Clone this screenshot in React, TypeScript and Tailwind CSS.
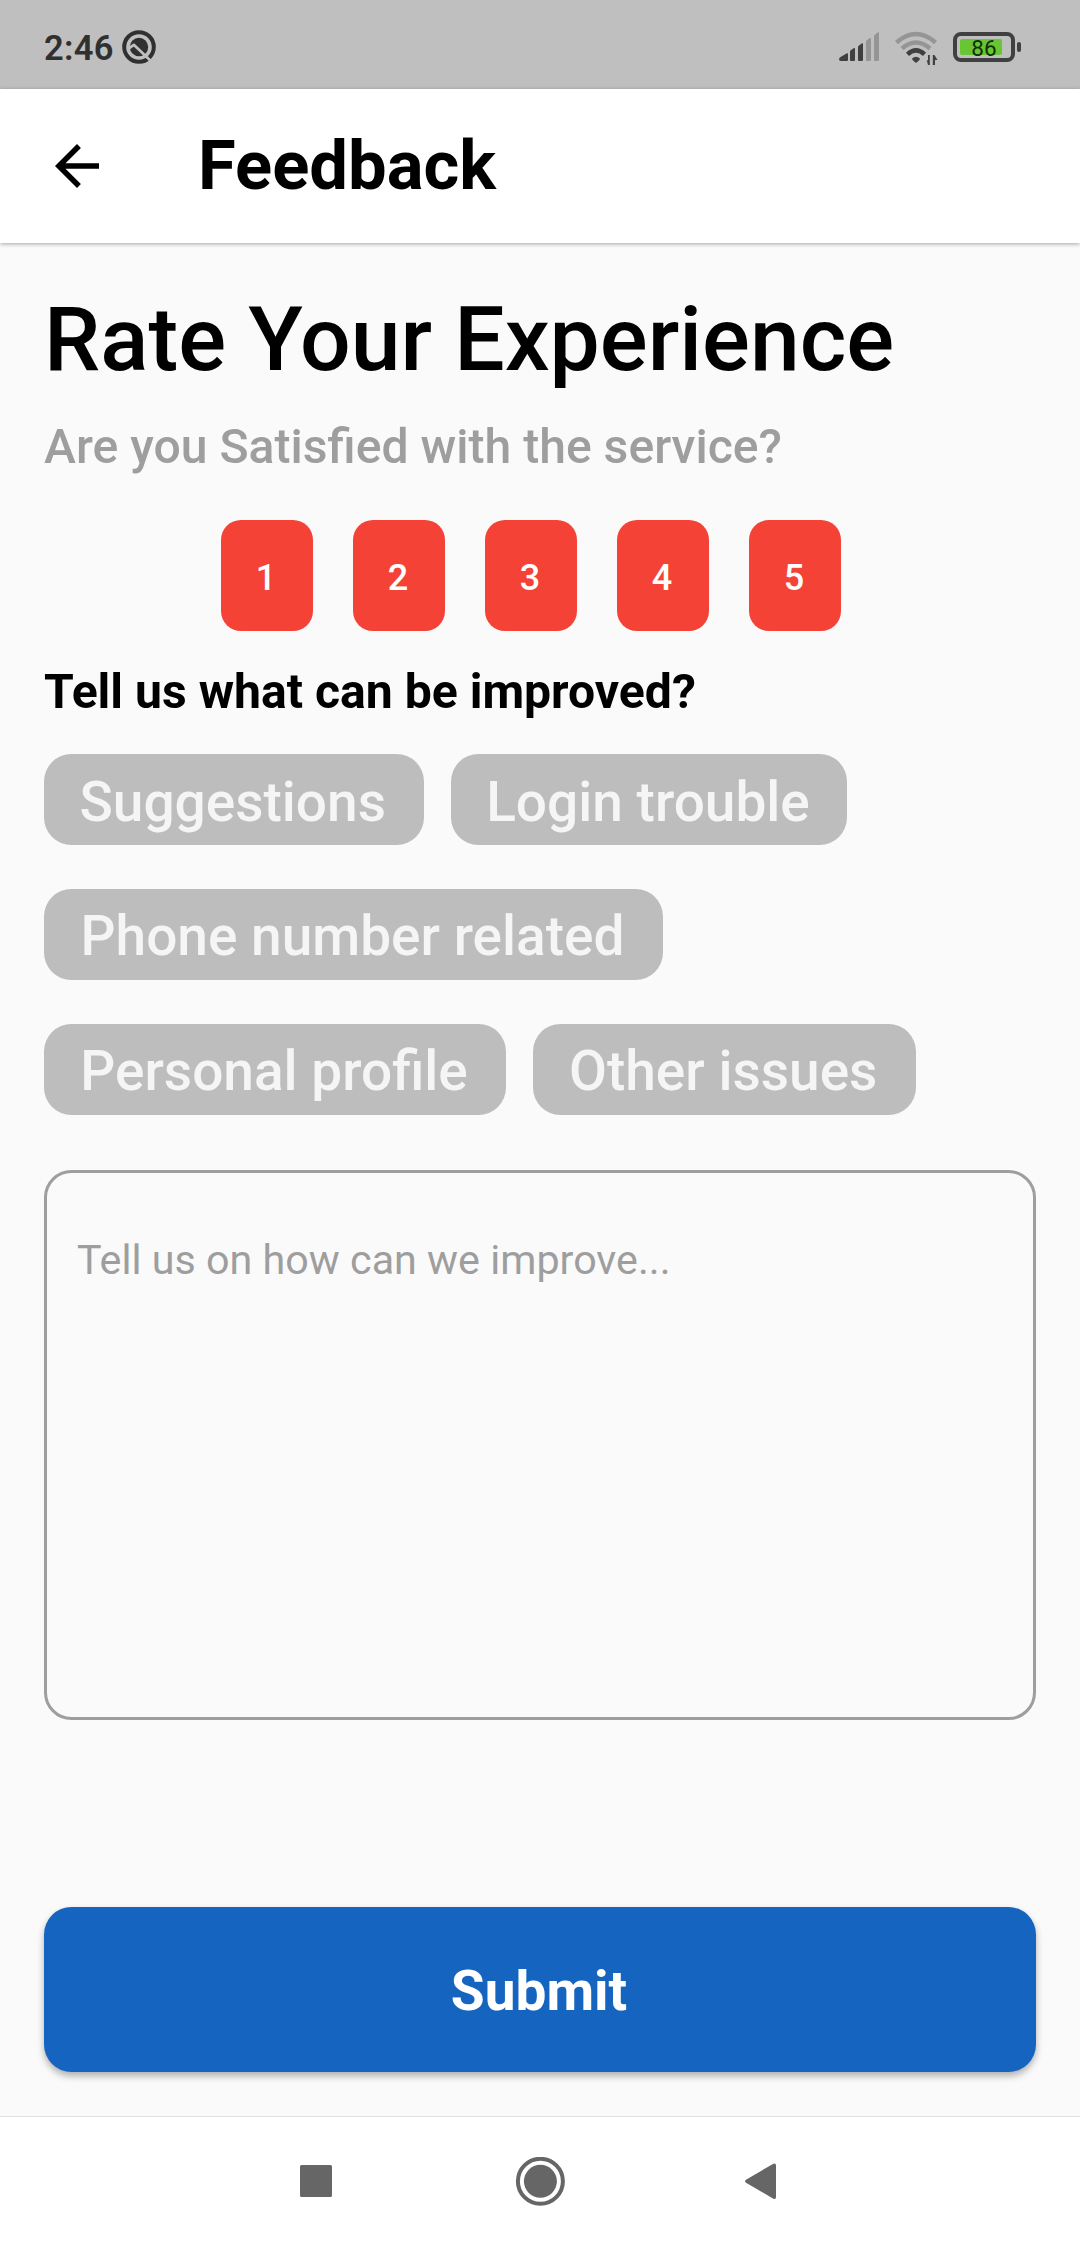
import React from "react";

function StatusBar() {
  return (
    <div className="flex h-[89px] shrink-0 items-center bg-[#bfbfbf] pl-[44px] pr-[59px] pt-[5px]">
      <span className="w-[78px] pt-[2px] text-[34.5px] font-semibold leading-[40px] tracking-[0.3px] text-[#303030]">2:46</span>
      <svg className="h-[34px] w-[34px]" viewBox="0 0 34 34" fill="none">
        <circle cx="17" cy="17" r="14.8" stroke="#303030" strokeWidth="4" />
        <circle cx="17" cy="17" r="9.2" fill="#303030" />
        <path d="M5.500 19.500L11.800 14.800L31 33" stroke="#bfbfbf" strokeWidth="2.700" strokeLinejoin="round" />
      </svg>
      <div className="grow" />
      <svg className="h-[36px] w-[186px]" viewBox="0 0 186 36">
        <g fill="#404040">
          <path d="M6 32Q4.500 32 4 30.500Q4 28.500 6 27.700L11.500 24.500Q13 23.800 13 25V31Q13 32 12 32Z" />
          <path d="M15 22.500Q15 21.700 16 21L19 19Q20 18.600 20 20V31Q20 32 19 32H16Q15 32 15 31Z" />
          <path d="M23 18Q23 17 24 16.400L27 14.300Q28 13.800 28 15V31Q28 32 27 32H24Q23 32 23 31Z" />
        </g>
        <g fill="#959595">
          <path d="M31 12.500Q31 11.600 32 11L35 9Q36 8.600 36 10V31Q36 32 35 32H32Q31 32 31 31Z" />
          <path d="M39 7Q39 6 40 5.400L43 3.300Q44 2.800 44 4V31Q44 32 43 32H40Q39 32 39 31Z" />
        </g>
        <g fill="none" strokeLinecap="butt">
          <path d="M61.500 13.500Q81 -3.500 100.500 13.500" stroke="#959595" strokeWidth="4.500" />
          <path d="M67 19.500Q81 7.500 95 19.500" stroke="#959595" strokeWidth="4.500" />
          <path d="M72.500 25.300Q81 17.600 89.500 25.300" stroke="#404040" strokeWidth="4.500" />
        </g>
        <path d="M77 29.500Q81 26 85 29.500Q85 31 81 34Q77 31 77 29.500Z" fill="#404040" />
        <path d="M94.800 26V36H93L91.800 31.300H93V26ZM97.800 36V26H99.500L102.500 31H100V36Z" fill="#404040" />
        <rect x="120" y="5" width="58" height="26" rx="6" fill="none" stroke="#404040" strokeWidth="4" />
        <rect x="125" y="10" width="42" height="16" rx="2" fill="#69c534" />
        <rect x="182" y="13" width="4" height="10" rx="2" fill="#404040" />
        <text x="149" y="26.800" textAnchor="middle" fontSize="22.500" fontWeight="400" fill="#10300a">86</text>
      </svg>
    </div>
  );
}

function AppBar() {
  return (
    <header className="relative flex h-[154px] shrink-0 items-center bg-white pl-[44px] shadow-[0_1px_4px_rgba(0,0,0,0.35)]">
      <svg className="h-[66px] w-[66px]" viewBox="0 0 24 24" fill="#000">
        <path d="M20 11H7.830l5.590-5.590L12 4l-8 8 8 8 1.410-1.410L7.830 13H20v-2z" />
      </svg>
      <h1 className="ml-[88px] text-[68.75px] font-bold leading-[80px] text-black">Feedback</h1>
    </header>
  );
}

function Chip({ label, width }: { label: string; width: string }) {
  return (
    <button
      className={`flex h-[91px] items-center justify-center whitespace-nowrap rounded-[27.5px] bg-[#bdbdbd] pr-[2px] pt-[4px] text-[55px] font-medium text-[#f5f5f5] ${width}`}
    >
      {label}
    </button>
  );
}

function NavBar() {
  return (
    <nav className="flex h-[130px] shrink-0 items-center border-t border-[#e2e2e2] bg-white pl-[300px]">
      <svg className="h-[50px] w-[478px]" viewBox="0 0 478 50" fill="#666">
        <rect x="0" y="8" width="32" height="32" rx="1.500" />
        <circle cx="240.400" cy="24.300" r="22.500" fill="none" stroke="#666" strokeWidth="4" />
        <circle cx="240.400" cy="24.300" r="16.500" />
        <path d="M446 22.700L473 6.900Q476 5.500 476 8.500V40Q476 43 473 41.500L446 25.700Q444 24.200 446 22.700Z" />
      </svg>
    </nav>
  );
}

export default function App() {
  return (
    <div className="flex h-[2246px] w-[1080px] flex-col overflow-hidden bg-[#fafafa] font-[Roboto,sans-serif]">
      <StatusBar />
      <AppBar />
      <main className="flex grow flex-col px-[44px] pt-[45px]">
        <h2 className="text-[89.375px] font-medium leading-[104px] text-black">Rate Your Experience</h2>
        <p className="mt-[27px] text-[48.125px] font-medium leading-[56px] text-[#9e9e9e]">Are you Satisfied with the service?</p>
        <div className="mt-[45.25px] flex gap-[40px] pl-[177px]">
          {[1, 2, 3, 4, 5].map((n) => (
            <button
              key={n}
              className="flex h-[110.5px] w-[92px] items-center justify-center rounded-[20px] bg-[#f44336] pr-[2px] pt-[5px] text-[36px] font-medium text-white"
            >
              {n}
            </button>
          ))}
        </div>
        <p className="mt-[33.25px] text-[48.125px] font-bold leading-[56px] text-black">Tell us what can be improved?</p>
        <div className="mt-[34.25px] flex flex-col gap-[43.75px]">
          <div className="flex gap-[27.5px]">
            <Chip label="Suggestions" width="w-[379.500px]" />
            <Chip label="Login trouble" width="w-[396px]" />
          </div>
          <Chip label="Phone number related" width="w-[619px]" />
          <div className="flex gap-[27px]">
            <Chip label="Personal profile" width="w-[462px]" />
            <Chip label="Other issues" width="w-[382.500px]" />
          </div>
        </div>
        <textarea
          className="mt-[55.25px] h-[550px] w-[992px] shrink-0 resize-none rounded-[27.5px] border-[3px] border-[#9e9e9e] bg-transparent px-[30px] pt-[62px] text-[41.25px] leading-[50px] outline-none placeholder:text-[#9e9e9e]"
          placeholder="Tell us on how can we improve..."
        />
        <button className="mt-[187px] h-[165px] w-[992px] shrink-0 rounded-[27.5px] bg-[#1565c0] pr-[2px] pt-[3px] text-[55px] font-bold text-white shadow-[0_4px_7px_rgba(0,0,0,0.3)]">
          Submit
        </button>
      </main>
      <NavBar />
    </div>
  );
}
